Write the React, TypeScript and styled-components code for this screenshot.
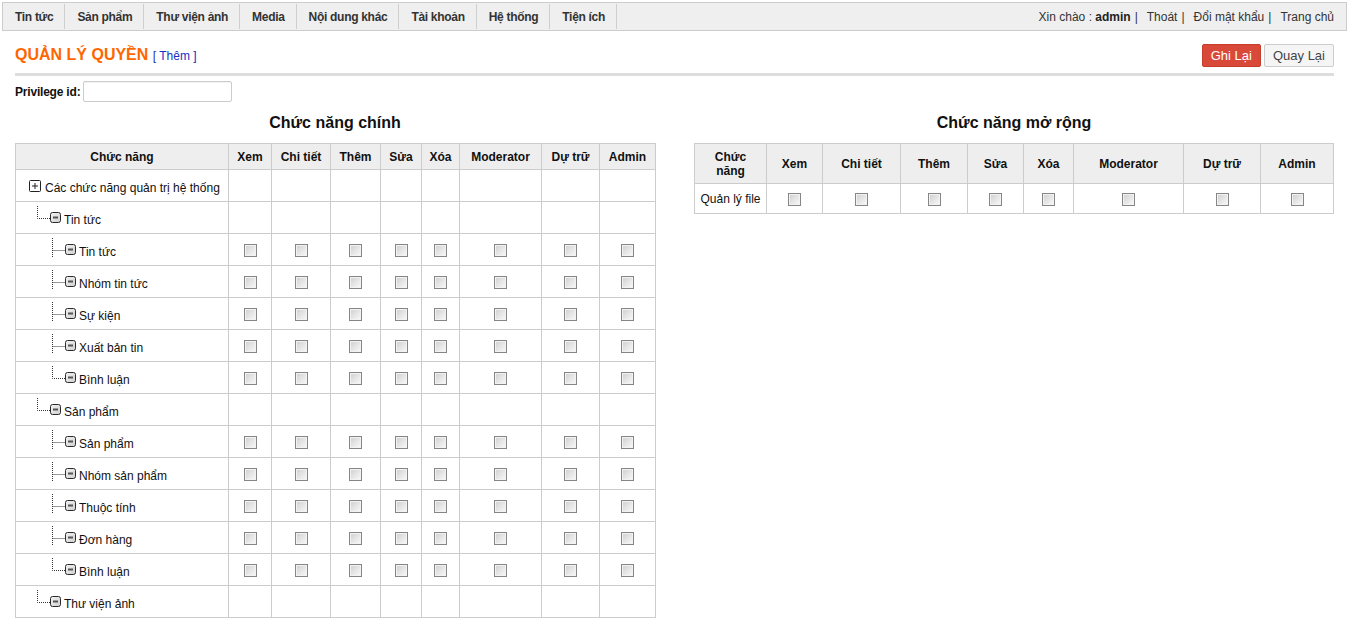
import React from "react";
import styled, { createGlobalStyle } from "styled-components";

const GlobalStyle = createGlobalStyle`
  html, body { margin: 0; padding: 0; background: #fff; }
  body {
    font-family: "Liberation Sans", Arial, sans-serif;
    font-size: 12px;
    color: #111;
  }
  * { box-sizing: border-box; }
`;

const Page = styled.div`
  width: 1345px;
  margin: 2px;
`;

const NavBar = styled.div`
  display: flex;
  justify-content: space-between;
  align-items: center;
  height: 29px;
  border: 1px solid #ccc;
  background: #efefef;
`;

const NavMenu = styled.ul`
  display: flex;
  align-items: center;
  list-style: none;
  margin: 0;
  padding: 0;
  height: 100%;
`;

const NavItem = styled.li`
  display: flex;
  align-items: center;
  height: 25px;
  padding: 0 11px 0 12px;
  border-right: 1px solid #cfcfcf;
  font-weight: bold;
  font-size: 12px;
  letter-spacing: -0.3px;
  color: #333;
`;

const UserBox = styled.div`
  padding-right: 12px;
  font-size: 12px;
  color: #333;
  white-space: pre;
`;

const Strong = styled.b`
  color: #222;
`;

const Sep = styled.span`
  padding: 0 9px 0 4px;
`;

const Content = styled.div`
  padding: 0 13px;
`;

const TitleRow = styled.div`
  display: flex;
  justify-content: space-between;
  align-items: center;
  margin-top: 13px;
  padding-bottom: 6px;
  border-bottom: 3px solid #ddd;
`;

const Title = styled.h1`
  margin: 0;
  font-size: 16px;
  line-height: 19px;
  font-weight: bold;
  color: #f60;
`;

const TitleLink = styled.span`
  font-size: 12px;
  font-weight: normal;
  color: #1a2fc4;
`;

const ButtonGroup = styled.div`
  display: flex;
  gap: 3px;
`;

const Button = styled.button<{ $primary?: boolean }>`
  height: 23px;
  padding: 0 8px;
  font-family: "Liberation Sans", Arial, sans-serif;
  font-size: 13px;
  border-radius: 2px;
  cursor: pointer;
  border: 1px solid ${(p) => (p.$primary ? "#c83c2b" : "#ccc")};
  background: ${(p) => (p.$primary ? "#d9493a" : "#f5f5f5")};
  color: ${(p) => (p.$primary ? "#fff" : "#444")};
`;

const FieldRow = styled.div`
  display: flex;
  align-items: center;
  margin-top: 5px;
`;

const FieldLabel = styled.label`
  font-weight: bold;
  font-size: 12px;
  letter-spacing: -0.2px;
  margin-right: 3px;
  color: #111;
`;

const TextInput = styled.input`
  width: 149px;
  height: 21px;
  border: 1px solid #ccc;
  border-radius: 2px;
  box-shadow: inset 0 1px 1px rgba(0, 0, 0, 0.05);
  padding: 0 4px;
  font-size: 12px;
`;

const Columns = styled.div`
  display: flex;
  justify-content: space-between;
`;

const Column = styled.section`
  width: 640px;
`;

const Heading = styled.h2`
  margin: 11px 0;
  font-size: 16px;
  line-height: 19px;
  font-weight: bold;
  text-align: center;
  color: #111;
`;

const Table = styled.table`
  width: 100%;
  border-collapse: collapse;
  table-layout: fixed;
`;

const HeadCell = styled.th<{ $w: number }>`
  width: ${(p) => p.$w}px;
  background: #eee;
  border: 1px solid #ccc;
  padding: 6px 2px 5px;
  font-size: 12px;
  line-height: 14px;
  font-weight: bold;
  text-align: center;
  color: #111;
`;

const Cell = styled.td<{ $h?: number }>`
  height: ${(p) => p.$h ?? 32}px;
  border: 1px solid #ccc;
  padding: 0;
  text-align: center;
  vertical-align: middle;
  font-size: 12px;
`;

const TreeCell = styled.td`
  height: 32px;
  border: 1px solid #ccc;
  padding: 0;
  vertical-align: middle;
`;

const TreeNode = styled.div<{ $indent: number }>`
  display: flex;
  align-items: center;
  padding-left: ${(p) => p.$indent}px;
  white-space: nowrap;
`;

const NodeLabel = styled.span<{ $gap: number }>`
  margin-left: ${(p) => p.$gap}px;
  padding-top: 5px;
  font-size: 12px;
  line-height: 14px;
  color: #111;
`;

const Check = styled.input.attrs({ type: "checkbox" })`
  appearance: none;
  -webkit-appearance: none;
  display: inline-block;
  width: 13px;
  height: 13px;
  margin: 0;
  vertical-align: middle;
  border: 1px solid #868686;
  background: linear-gradient(135deg, #cfcfcf 0%, #fafafa 100%);
  box-shadow: inset 0 0 0 1px #f2f2f2;
`;

const PlusIcon = () => (
  <svg width="12" height="12" viewBox="0 0 12 12">
    <rect x="0.5" y="0.5" width="11" height="11" rx="1" fill="#fff" stroke="#222" />
    <path d="M3 6h6M6 3v6" stroke="#222" strokeWidth="1" />
  </svg>
);

const MinusIcon = () => (
  <svg width="11" height="11" viewBox="0 0 11 11">
    <defs>
      <linearGradient id="mg" x1="0" y1="0" x2="1" y2="1">
        <stop offset="0" stopColor="#f4f4f4" />
        <stop offset="1" stopColor="#cfcfcf" />
      </linearGradient>
    </defs>
    <rect x="0.5" y="0.5" width="10" height="10" rx="2" fill="url(#mg)" stroke="#2a2a2a" />
    <rect x="3" y="4.5" width="5" height="2" fill="#555" />
  </svg>
);

const Connector = ({ last }: { last: boolean }) => (
  <svg width="13" height="24" viewBox="0 0 13 24">
    <path
      d={last ? "M0.5 0V12.5H13" : "M0.5 0V19M0.5 12.5H13"}
      fill="none"
      stroke="#333"
      strokeWidth="1"
      strokeDasharray="1 1"
    />
  </svg>
);

type Row = { level: 0 | 1 | 2; label: string; last?: boolean; checks?: boolean };

const rows: Row[] = [
  { level: 0, label: "Các chức năng quản trị hệ thống" },
  { level: 1, label: "Tin tức", last: true },
  { level: 2, label: "Tin tức", checks: true },
  { level: 2, label: "Nhóm tin tức", checks: true },
  { level: 2, label: "Sự kiện", checks: true },
  { level: 2, label: "Xuất bản tin", checks: true },
  { level: 2, label: "Bình luận", last: true, checks: true },
  { level: 1, label: "Sản phẩm", last: true },
  { level: 2, label: "Sản phẩm", checks: true },
  { level: 2, label: "Nhóm sản phẩm", checks: true },
  { level: 2, label: "Thuộc tính", checks: true },
  { level: 2, label: "Đơn hàng", checks: true },
  { level: 2, label: "Bình luận", last: true, checks: true },
  { level: 1, label: "Thư viện ảnh", last: true },
];

const mainCols: [string, number][] = [
  ["Chức năng", 213],
  ["Xem", 43],
  ["Chi tiết", 59],
  ["Thêm", 50],
  ["Sửa", 41],
  ["Xóa", 38],
  ["Moderator", 82],
  ["Dự trữ", 58],
  ["Admin", 56],
];

const extCols: [string, number][] = [
  ["Chức năng", 72],
  ["Xem", 56],
  ["Chi tiết", 78],
  ["Thêm", 67],
  ["Sửa", 56],
  ["Xóa", 50],
  ["Moderator", 110],
  ["Dự trữ", 77],
  ["Admin", 73],
];

const TreeLabel = ({ row }: { row: Row }) => {
  if (row.level === 0) {
    return (
      <TreeNode $indent={13}>
        <PlusIcon />
        <NodeLabel $gap={4}>{row.label}</NodeLabel>
      </TreeNode>
    );
  }
  return (
    <TreeNode $indent={row.level === 1 ? 21 : 36}>
      <Connector last={!!row.last} />
      <MinusIcon />
      <NodeLabel $gap={3}>{row.label}</NodeLabel>
    </TreeNode>
  );
};

const menu = ["Tin tức", "Sản phẩm", "Thư viện ảnh", "Media", "Nội dung khác", "Tài khoản", "Hệ thống", "Tiện ích"];

export default function App() {
  return (
    <Page>
      <GlobalStyle />
      <NavBar>
        <NavMenu>
          {menu.map((m) => (
            <NavItem key={m}>{m}</NavItem>
          ))}
        </NavMenu>
        <UserBox>
          Xin chào : <Strong>admin</Strong>
          <Sep>|</Sep>Thoát<Sep>|</Sep>Đổi mật khẩu<Sep>|</Sep>Trang chủ
        </UserBox>
      </NavBar>
      <Content>
        <TitleRow>
          <Title>
            QUẢN LÝ QUYỀN <TitleLink>[ Thêm ]</TitleLink>
          </Title>
          <ButtonGroup>
            <Button $primary>Ghi Lại</Button>
            <Button>Quay Lại</Button>
          </ButtonGroup>
        </TitleRow>
        <FieldRow>
          <FieldLabel>Privilege id:</FieldLabel>
          <TextInput />
        </FieldRow>
        <Columns>
          <Column>
            <Heading>Chức năng chính</Heading>
            <Table>
              <thead>
                <tr>
                  {mainCols.map(([t, w]) => (
                    <HeadCell key={t} $w={w}>
                      {t}
                    </HeadCell>
                  ))}
                </tr>
              </thead>
              <tbody>
                {rows.map((r, i) => (
                  <tr key={i}>
                    <TreeCell>
                      <TreeLabel row={r} />
                    </TreeCell>
                    {mainCols.slice(1).map(([t]) => (
                      <Cell key={t}>{r.checks ? <Check /> : null}</Cell>
                    ))}
                  </tr>
                ))}
              </tbody>
            </Table>
          </Column>
          <Column>
            <Heading>Chức năng mở rộng</Heading>
            <Table>
              <thead>
                <tr>
                  {extCols.map(([t, w], i) => (
                    <HeadCell key={t} $w={w}>
                      {i === 0 ? (
                        <>
                          Chức
                          <br />
                          năng
                        </>
                      ) : (
                        t
                      )}
                    </HeadCell>
                  ))}
                </tr>
              </thead>
              <tbody>
                <tr>
                  <Cell $h={30}>Quản lý file</Cell>
                  {extCols.slice(1).map(([t]) => (
                    <Cell key={t} $h={30}>
                      <Check />
                    </Cell>
                  ))}
                </tr>
              </tbody>
            </Table>
          </Column>
        </Columns>
      </Content>
    </Page>
  );
}
